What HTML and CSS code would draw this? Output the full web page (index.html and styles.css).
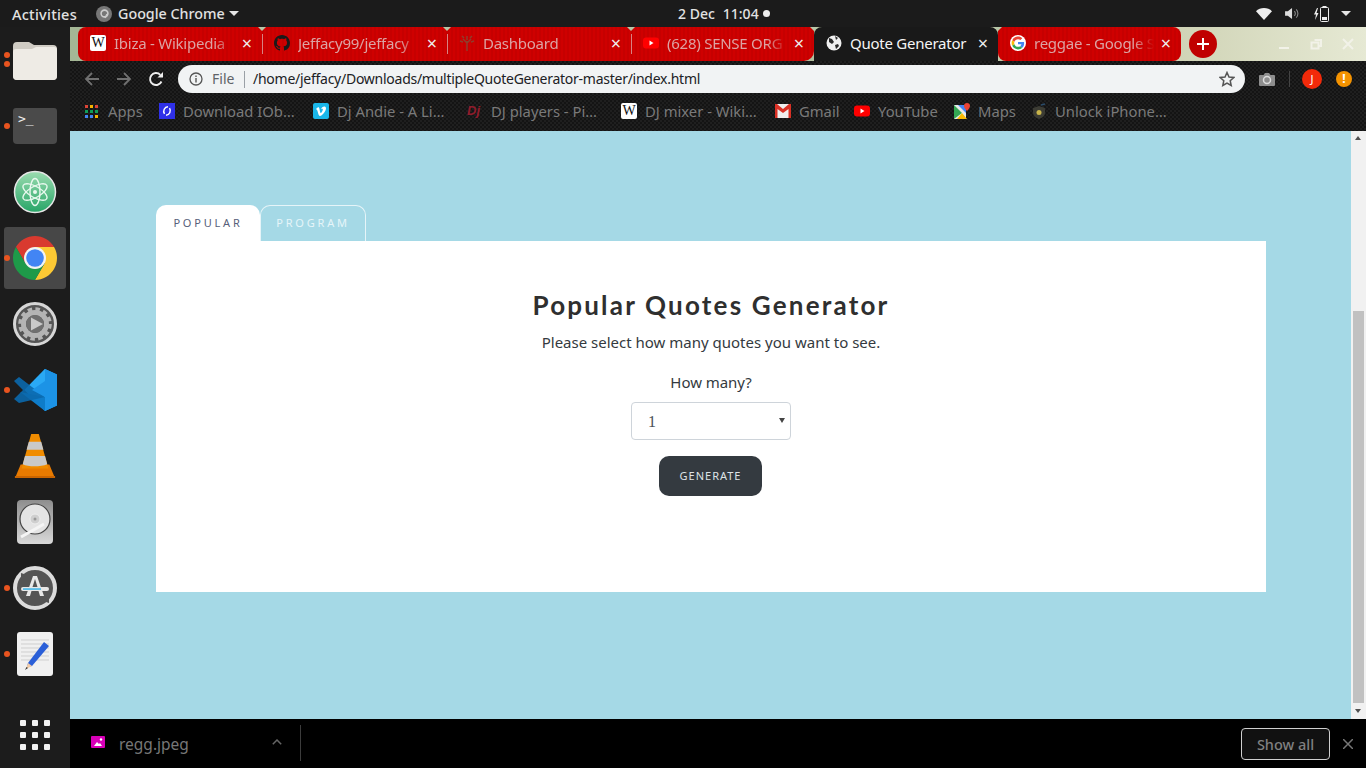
FILE: index.html
```html
<!DOCTYPE html>
<html lang="en">
<head>
<meta charset="utf-8">
<title>Quote Generator</title>
<link rel="stylesheet" href="styles.css">
</head>
<body>
<div class="desktop">
  <header class="topbar">
    <div class="top-left">
      <span class="activities">Activities</span>
      <svg class="top-chrome" viewBox="0 0 16 16"><circle cx="8" cy="8" r="8" fill="#777"/><circle cx="8.5" cy="7.5" r="3.4" fill="none" stroke="#ccc" stroke-width="1.6"/><path d="M9 12l2-4" stroke="#ccc" stroke-width="1.4"/></svg>
      <span class="app-name">Google Chrome</span>
      <span class="caret"></span>
    </div>
    <div class="clock"><span>2 Dec</span><span>11:04</span><i class="clock-dot"></i></div>
    <div class="top-right">
      <svg class="wifi" viewBox="0 0 16 12"><path d="M0 3.2C2 1.2 5 0 8 0s6 1.2 8 3.2L8 12z" fill="#eee"/></svg>
      <svg class="speaker" viewBox="0 0 16 14"><path d="M0 4.5h3L7.500 1v12L3 9.500H0z" fill="#ddd"/><path d="M10 4.500a3.500 3.500 0 0 1 0 5M12 2.500a6.500 6.500 0 0 1 0 9" fill="none" stroke="#888" stroke-width="1.200"/></svg>
      <svg class="battery" viewBox="0 0 16 16"><path d="M3 2 0 8.500h2L1 14l3.500-7h-2L4 2z" fill="#eee"/><rect x="6.500" y="1.500" width="8" height="14" rx="1" fill="none" stroke="#eee"/><rect x="8.500" y="0" width="4" height="1.500" fill="#eee"/><rect x="8" y="11" width="5" height="3" fill="#eee"/></svg>
      <span class="caret"></span>
    </div>
  </header>

  <div class="workspace">
    <nav class="dock">
      <div class="dock-item running-two">
        <svg class="dock-icon" viewBox="0 0 44 40"><path d="M0 6a4 4 0 0 1 4-4h12l5 3h19a4 4 0 0 1 4 4v27a4 4 0 0 1-4 4H4a4 4 0 0 1-4-4z" fill="#cfcbc3"/><path d="M0 12a3 3 0 0 1 3-3h16l4-2h18a3 3 0 0 1 3 3v26a4 4 0 0 1-4 4H4a4 4 0 0 1-4-4z" fill="#eeebe5"/></svg>
      </div>
      <div class="dock-item running">
        <svg class="dock-icon" viewBox="0 0 44 36"><path d="M3 0h38a3 3 0 0 1 3 3v29a4 4 0 0 1-4 4H4a4 4 0 0 1-4-4V3a3 3 0 0 1 3-3z" fill="#4a4a4a"/><text x="5" y="15" class="term-text">&gt;_</text></svg>
      </div>
      <div class="dock-item">
        <svg class="dock-icon" viewBox="0 0 44 44"><defs><linearGradient id="atomg" x1="0" y1="0" x2="0" y2="1"><stop offset="0" stop-color="#9bdcb0"/><stop offset="1" stop-color="#27a567"/></linearGradient></defs><circle cx="22" cy="22" r="20.500" fill="url(#atomg)" stroke="#e6e6e6" stroke-width="1.500"/><g fill="none" stroke="#e8f8ee" stroke-width="1.400"><ellipse cx="22" cy="22" rx="13.500" ry="5.500" transform="rotate(30 22 22)"/><ellipse cx="22" cy="22" rx="13.500" ry="5.500" transform="rotate(-30 22 22)"/><ellipse cx="22" cy="22" rx="13.500" ry="5" transform="rotate(90 22 22)"/></g><circle cx="22" cy="22" r="2" fill="#e8f8ee"/></svg>
      </div>
      <div class="dock-item running active">
        <svg class="dock-icon" viewBox="-22 -22 44 44"><path d="M0-11H19.050A22 22 0 0 0-19.050-11L-9.500 5.500z" fill="#d93a2f"/><path d="M0-11H19.050A22 22 0 0 0-19.050-11L-9.500 5.500z" fill="#fcc934" transform="rotate(120)"/><path d="M0-11H19.050A22 22 0 0 0-19.050-11L-9.500 5.500z" fill="#1e9a49" transform="rotate(240)"/><circle r="11" fill="#f3f3f3"/><circle r="8.800" fill="#4285f4"/></svg>
      </div>
      <div class="dock-item">
        <svg class="dock-icon" viewBox="0 0 44 44"><circle cx="22" cy="22" r="20.500" fill="#555" stroke="#d6d6d6" stroke-width="3"/><circle cx="22" cy="22" r="11.500" fill="none" stroke="#b4b4b4" stroke-width="5"/><circle cx="22" cy="22" r="15" fill="none" stroke="#b4b4b4" stroke-width="3.500" stroke-dasharray="4.500 3.350"/><circle cx="22" cy="22" r="9" fill="#707070"/><path d="M18 15.500 30 22l-12 6.500z" fill="#c9c9c9"/></svg>
      </div>
      <div class="dock-item running">
        <svg class="dock-icon" viewBox="0 0 44 44"><path d="M32 1 44 6.500v31L32 43 11.500 22z" fill="#1f9cf0"/><path d="M32 1v14L19 24 11.500 22z" fill="#2aa9f5"/><path d="M32 29v14L10 26l-3-2z" fill="#0e7cc9"/><path d="M32 29 6 9 1 13l9 9-9 9 5 4z" fill="#0b69ad" opacity=".9"/><path d="M32 1 44 6.500v31L32 43V29L19 22 32 13z" fill="#1c93e6"/></svg>
      </div>
      <div class="dock-item">
        <svg class="dock-icon" viewBox="0 0 42 46"><path d="M1 44l5-12h30l5 12z" fill="#e87a00"/><path d="M0 44h42v2H0z" fill="#c96400"/><path d="M17 0h8l10 36H7z" fill="#f08c00"/><path d="M14.500 8h13l2.300 8.500H12.200z" fill="#c9c9c9"/><path d="M10.500 23h21l2.300 8.500c-7 3-20 3-25.600 0z" fill="#c9c9c9"/></svg>
      </div>
      <div class="dock-item">
        <svg class="dock-icon disk-icon" viewBox="0 0 36 44"><defs><linearGradient id="diskg" x1="0" y1="0" x2="0" y2="1"><stop offset="0" stop-color="#8e8e8e"/><stop offset="1" stop-color="#d9d9d9"/></linearGradient></defs><rect width="36" height="44" rx="4" fill="url(#diskg)"/><circle cx="18" cy="19" r="15" fill="#e4e4e4" stroke="#444" stroke-width="1.200"/><circle cx="18" cy="19" r="5" fill="#cfcfcf" stroke="#eee"/><circle cx="18" cy="19" r="1.500" fill="#999"/><path d="M4 37 27 24" stroke="#f5f5f5" stroke-width="3"/></svg>
      </div>
      <div class="dock-item running">
        <svg class="dock-icon" viewBox="0 0 44 44"><circle cx="22" cy="22" r="20" fill="#555" stroke="#dcdcdc" stroke-width="4"/><path d="M8 7 14 9 8 14zM36 37l-6-2 6-5z" fill="#555"/><path d="M13 30 20 10h4l7 20h-4l-1.500-5h-7L17 30zM19.500 21h5L22 13z" fill="#e8e8e8"/><rect x="8" y="21" width="28" height="4" rx="2" fill="#e8e8e8"/><rect x="10" y="22.300" width="18" height="1.500" fill="#3bb3e8"/></svg>
      </div>
      <div class="dock-item running">
        <svg class="dock-icon disk-icon" viewBox="0 0 36 44"><rect width="36" height="44" rx="3" fill="#f0f0f0"/><path d="M4 8h28M4 12h28M4 16h28M4 20h28M4 24h28M4 28h28" stroke="#cfcfcf"/><path d="M11 31 27 10l5 4-17 20-5 1z" fill="#2a5fd8"/><path d="M11 31l4 3-6 3z" fill="#f1cba6"/><path d="M8 38l1.500-3 1.500 1z" fill="#333"/></svg>
      </div>
      <div class="dock-spacer"></div>
      <div class="dock-item apps-grid">
        <div class="dots"><i></i><i></i><i></i><i></i><i></i><i></i><i></i><i></i><i></i></div>
      </div>
    </nav>

    <div class="browser">
      <div class="tabstrip">
        <div class="tabs">
          <div class="tab first">
            <span class="fav wiki">W</span><span class="tab-title">Ibiza - Wikipedia</span><span class="tab-x">×</span>
          </div>
          <div class="tab">
            <svg class="fav" viewBox="0 0 16 16"><path fill="#1a1a1a" d="M8 0C3.580 0 0 3.580 0 8c0 3.540 2.290 6.530 5.470 7.590.4.070.55-.17.55-.38 0-.19-.01-.82-.01-1.490-2.010.37-2.530-.49-2.690-.94-.09-.23-.48-.94-.82-1.130-.28-.15-.68-.52-.01-.53.63-.01 1.080.58 1.230.82.72 1.210 1.870.87 2.330.66.07-.52.28-.87.51-1.070-1.780-.2-3.640-.89-3.640-3.950 0-.87.31-1.590.82-2.150-.08-.2-.36-1.020.08-2.120 0 0 .67-.21 2.200.82.64-.18 1.320-.27 2-.27.68 0 1.360.09 2 .27 1.530-1.040 2.200-.82 2.200-.82.44 1.100.16 1.920.08 2.120.51.56.82 1.270.82 2.150 0 3.070-1.870 3.750-3.650 3.950.29.25.54.73.54 1.480 0 1.070-.01 1.930-.01 2.200 0 .21.15.46.55.38A8.013 8.013 0 0 0 16 8c0-4.420-3.580-8-8-8z"/></svg>
            <span class="tab-title">Jeffacy99/jeffacy</span><span class="tab-x">×</span>
          </div>
          <div class="tab">
            <svg class="fav" viewBox="0 0 16 16"><path d="M8 16V6M8 8 4 4M8 8l4-4M8 5V1M4 7 1 6M12 7l3-1M5 3 3 1M11 3l2-2" stroke="#8f3d2c" stroke-width="1.500" fill="none"/></svg>
            <span class="tab-title">Dashboard</span><span class="tab-x">×</span>
          </div>
          <div class="tab before-active">
            <svg class="fav" viewBox="0 0 16 16"><rect y="2.500" width="16" height="11" rx="3" fill="#f00"/><path d="M6.500 5.500 10.500 8l-4 2.500z" fill="#fff"/></svg>
            <span class="tab-title">(628) SENSE ORG</span><span class="tab-x">×</span>
          </div>
          <div class="tab current">
            <svg class="fav" viewBox="0 0 16 16"><circle cx="8" cy="8" r="7.500" fill="#f0f0f0"/><path d="M3 3l3 1 2 3-2 2-3-2zM9 10l3-1 1 2-3 3zM9 1l3 2-2 2z" fill="#2a2a2a"/></svg>
            <span class="tab-title">Quote Generator</span><span class="tab-x">×</span>
          </div>
          <div class="tab after-active">
            <svg class="fav" viewBox="-6 -6 60 60"><circle cx="24" cy="24" r="30" fill="#fff"/><path fill="#EA4335" d="M24 9.500c3.540 0 6.710 1.220 9.210 3.600l6.850-6.850C35.900 2.380 30.470 0 24 0 14.620 0 6.510 5.380 2.560 13.220l7.980 6.190C12.430 13.720 17.740 9.500 24 9.500z"/><path fill="#4285F4" d="M46.980 24.550c0-1.570-.15-3.090-.38-4.550H24v9.020h12.940c-.58 2.960-2.260 5.480-4.780 7.180l7.730 6c4.510-4.180 7.090-10.360 7.090-17.650z"/><path fill="#FBBC05" d="M10.530 28.590c-.48-1.450-.76-2.990-.76-4.590s.27-3.140.76-4.590l-7.980-6.190C.92 16.460 0 20.120 0 24c0 3.880.92 7.540 2.560 10.780l7.970-6.190z"/><path fill="#34A853" d="M24 48c6.480 0 11.930-2.130 15.890-5.810l-7.730-6c-2.150 1.450-4.920 2.300-8.160 2.300-6.260 0-11.570-4.220-13.470-9.910l-7.980 6.190C6.510 42.620 14.620 48 24 48z"/></svg>
            <span class="tab-title">reggae - Google S</span><span class="tab-x">×</span>
          </div>
        </div>
        <div class="new-tab"><svg viewBox="0 0 14 14"><path d="M7 1v12M1 7h12" stroke="#fff" stroke-width="2"/></svg></div>
        <div class="win-controls">
          <svg viewBox="0 0 14 14"><rect x="2" y="10" width="10" height="2" fill="#f2f2e8"/></svg>
          <svg viewBox="0 0 14 14"><path d="M5.500 3H12v6h-2.500M2.500 5.500H9.500V11.500H2.500z" fill="none" stroke="#f2f2e8" stroke-width="2"/></svg>
          <svg viewBox="0 0 14 14"><path d="M2 2l10 10M12 2 2 12" stroke="#f2f2e8" stroke-width="2"/></svg>
        </div>
      </div>

      <div class="toolbar">
        <svg class="nav-btn" viewBox="0 0 16 16"><path d="M15 8H2M8 2 2 8l6 6" fill="none" stroke="#707070" stroke-width="1.800"/></svg>
        <svg class="nav-btn" viewBox="0 0 16 16"><path d="M1 8h13M8 2l6 6-6 6" fill="none" stroke="#707070" stroke-width="1.800"/></svg>
        <svg class="nav-btn" viewBox="0 0 16 16"><path d="M13.500 10.500A6 6 0 1 1 12.300 3.800" fill="none" stroke="#eee" stroke-width="1.900"/><path d="M9.500 6.500H15V1z" fill="#eee"/></svg>
        <div class="omnibox">
          <svg class="info" viewBox="0 0 14 14"><circle cx="7" cy="7" r="6" fill="none" stroke="#555" stroke-width="1.300"/><path d="M7 6v4.500M7 3.500v1.500" stroke="#555" stroke-width="1.400"/></svg>
          <span class="scheme">File</span>
          <span class="omni-sep"></span>
          <span class="url">/home/jeffacy/Downloads/multipleQuoteGenerator-master/index.html</span>
          <svg class="star" viewBox="0 0 16 16"><path d="M8 1.500 10 6l4.800.5-3.600 3.200 1 4.800L8 12l-4.200 2.500 1-4.800L1.200 6.500 6 6z" fill="none" stroke="#555" stroke-width="1.500"/></svg>
        </div>
        <svg class="camera" viewBox="0 0 16 14"><path d="M1 3h3.500L6 1h4l1.500 2H15a1 1 0 0 1 1 1v9a1 1 0 0 1-1 1H1a1 1 0 0 1-1-1V4a1 1 0 0 1 1-1z" fill="#8e8e8e"/><circle cx="8" cy="8" r="3.500" fill="none" stroke="#ddd" stroke-width="1.500"/></svg>
        <span class="tool-sep"></span>
        <span class="avatar">J</span>
        <span class="alert">!</span>
      </div>

      <div class="bookmarks">
        <div class="bm"><span class="apps-ico"><i></i><i></i><i></i><i></i><i></i><i></i><i></i><i></i><i></i></span><span class="bm-label">Apps</span></div>
        <div class="bm"><svg class="bm-ico" viewBox="0 0 16 16"><rect width="16" height="16" fill="#2f30e8"/><path d="M9 3.800a4.500 4.500 0 0 0-3.500 7M7 12.200a4.500 4.500 0 0 0 3.500-7" fill="none" stroke="#fff" stroke-width="1.500"/></svg><span class="bm-label">Download IOb…</span></div>
        <div class="bm"><svg class="bm-ico" viewBox="0 0 16 16"><rect width="16" height="16" rx="2" fill="#1ab7ea"/><path d="M3 6c2-2 3-2.500 3.500 0 .4 2 .7 4 1.300 4 .8 0 2.200-3 2-3.800-.2-.8-1.200-.5-1.700 0C8.500 3.500 13 2 13 5.500 13 8 9 13 7 13c-2 0-2-5.500-3.200-6.200z" fill="#fff"/></svg><span class="bm-label">Dj Andie - A Li…</span></div>
        <div class="bm"><svg class="bm-ico" viewBox="0 0 16 16"><text x="0" y="12" class="dj-mark">Dj</text></svg><span class="bm-label">DJ players - Pi…</span></div>
        <div class="bm"><span class="fav wiki">W</span><span class="bm-label">DJ mixer - Wiki…</span></div>
        <div class="bm"><svg class="bm-ico" viewBox="0 0 16 14"><rect width="16" height="14" fill="#eee"/><path d="M0 0h2l6 5 6-5h2v14h-2.500V5L8 9 2.500 5v9H0z" fill="#d93025"/></svg><span class="bm-label">Gmail</span></div>
        <div class="bm"><svg class="bm-ico" viewBox="0 0 16 16"><rect y="2.500" width="16" height="11" rx="3" fill="#f00"/><path d="M6.500 5.500 10.500 8l-4 2.500z" fill="#fff"/></svg><span class="bm-label">YouTube</span></div>
        <div class="bm"><svg class="bm-ico" viewBox="0 0 16 16"><path d="M0 2h12v14H0z" fill="#e8e8e8"/><path d="M0 2l8 8-8 6z" fill="#34a853"/><path d="M8 10l5 6H3z" fill="#fbbc05"/><path d="M4 2l8 8V2z" fill="#4285f4"/><path d="M13 0a3 3 0 0 1 3 3c0 2-3 5-3 5s-3-3-3-5a3 3 0 0 1 3-3z" fill="#ea4335"/></svg><span class="bm-label">Maps</span></div>
        <div class="bm"><svg class="bm-ico" viewBox="0 0 16 16"><path d="M8 3 14 5v5c0 3-3 5-6 6-3-1-6-3-6-6V5z" fill="#3c3c34"/><circle cx="8" cy="9.500" r="2.500" fill="#c9b54a"/><path d="M10 2l4-1" stroke="#2a4a68" stroke-width="1.500"/></svg><span class="bm-label">Unlock iPhone…</span></div>
      </div>

      <div class="viewport">
        <main class="page">
          <div class="panel-tabs">
            <a class="panel-tab on">POPULAR</a>
            <a class="panel-tab">PROGRAM</a>
          </div>
          <section class="card">
            <h1 class="heading">Popular Quotes Generator</h1>
            <p class="lead">Please select how many quotes you want to see.</p>
            <label class="how" for="count">How many?</label>
            <span class="select-wrap">
              <select id="count" class="count"><option>1</option><option>2</option><option>3</option></select>
            </span>
            <button class="generate" type="button">GENERATE</button>
          </section>
        </main>
        <div class="scrollbar">
          <span class="arrow up"></span>
          <span class="sb-fill"></span>
          <span class="thumb"></span>
          <span class="arrow down"></span>
        </div>
      </div>

      <footer class="downloads">
        <svg class="file-ico" viewBox="0 0 14 12"><rect width="14" height="12" rx="1" fill="#d800b8"/><path d="M3 10l3-4 2 2 1-1 2 3z" fill="#fff"/><circle cx="10" cy="3.500" r="1.200" fill="#fff"/></svg>
        <span class="file-name">regg.jpeg</span>
        <svg class="chev" viewBox="0 0 10 6"><path d="M.8 5.200 5 1l4.200 4.200" fill="none" stroke="#666" stroke-width="1.500"/></svg>
        <span class="dl-sep"></span>
        <span class="dl-fill"></span>
        <button class="show-all" type="button">Show all</button>
        <svg class="dl-x" viewBox="0 0 10 10"><path d="M0 0l10 10M10 0 0 10" stroke="#777" stroke-width="1.500"/></svg>
      </footer>
    </div>
  </div>
</div>
</body>
</html>
```

FILE: styles.css
```css
* { box-sizing: border-box; }
html, body { margin: 0; height: 100%; overflow: hidden; }
body { font-family: "Noto Sans", "Liberation Sans", sans-serif; background: #1c1c1c; }
svg { display: block; flex: none; }

.desktop { width: 1366px; height: 768px; display: flex; flex-direction: column; }

/* GNOME top bar */
.topbar { height: 27px; background: #1b1b1b; display: grid; grid-template-columns: 678px auto 1fr; align-items: center; color: #e2e2e2; font-size: 14px; }
.top-left { display: flex; align-items: center; padding-left: 12px; }
.activities { width: 84px; font-size: 14.500px; letter-spacing: .25px; font-weight: 500; }
.top-chrome { width: 16px; height: 16px; margin-right: 6px; }
.app-name { width: 111px; font-size: 14.300px; font-weight: 500; }
.caret { width: 0; height: 0; border-left: 5px solid transparent; border-right: 5px solid transparent; border-top: 5px solid #e6e6e6; }
.clock { display: flex; align-items: center; gap: 8px; font-weight: 500; }
.clock-dot { width: 7px; height: 7px; margin-left: -4px; border-radius: 50%; background: #eee; }
.top-right { display: flex; align-items: center; justify-content: flex-end; gap: 13px; padding-right: 15px; }
.top-right .caret { margin-left: -2px; }
.wifi { width: 16px; height: 12px; }
.speaker { width: 15px; height: 13px; margin-right: 1px; }
.battery { width: 16px; height: 16px; }

.workspace { flex: 1; display: flex; min-height: 0; }

/* Dock */
.dock { width: 70px; flex: none; background: #1c1c1c; display: flex; flex-direction: column; }
.dock-item { height: 66px; flex: none; display: flex; align-items: center; justify-content: center; position: relative; }
.dock-icon { width: 44px; height: 44px; }
.dock-item.running:nth-child(2) .dock-icon { height: 36px; }
.disk-icon { width: 36px; }
.term-text { font-family: "DejaVu Sans Mono", monospace; font-size: 13px; fill: #eee; }
.dj-mark { font: italic 700 13px "Liberation Sans", sans-serif; fill: #8f1c2c; }
.dock-spacer { flex: 1; }
.dock-item.active::before { content: ""; position: absolute; left: 4px; top: 2px; width: 62px; height: 62px; border-radius: 3px; background: #474747; }
.dock-item.active .dock-icon { position: relative; }
.running::after, .running-two::after { content: ""; position: absolute; left: 4px; top: 30px; width: 6px; height: 6px; border-radius: 50%; background: #e9541f; }
.running-two::after { top: 25px; box-shadow: 0 9px 0 #e9541f; }
.dots { display: grid; grid-template-columns: repeat(3, 6px); gap: 6px; }
.dots i { width: 6px; height: 6px; border-radius: 1px; background: #f2f2f2; }

/* Browser */
.browser { flex: 1; min-width: 0; display: flex; flex-direction: column; }
.tabstrip { height: 34px; flex: none; display: flex; padding-left: 8px; background: linear-gradient(90deg, #a4b795 0%, #b4c0a0 60%, #cfd3b5 85%, #e6e9d4 100%); }
.tabs { display: grid; grid-template-columns: 184px 185px 184px 183px 184px 183px; }
.tab { display: flex; align-items: center; padding: 0 7px 2px 12px; position: relative; color: #dca3a3; font-size: 15px;
  background: repeating-linear-gradient(90deg, #c60000 0 2px, #cf0000 2px 4px); border-radius: 0; }
.tab.first { border-radius: 8px 0 0 8px; }
.tab + .tab::before { content: ""; position: absolute; left: 0; top: 7px; width: 1px; height: 20px; background: #d98282; }
.tab + .tab::after { content: ""; position: absolute; left: -4px; top: 0; border-left: 4px solid transparent; border-right: 4px solid transparent; border-top: 4px solid #b7c7a8; }
.tab.before-active { border-radius: 0 0 10px 0; }
.tab.current { background: #191919; color: #f5f5f5; border-radius: 8px 8px 0 0; }
.tab.current::before, .tab.after-active::before { display: none; }
.tab.after-active { border-radius: 0 8px 8px 8px; }
.fav { width: 16px; height: 16px; flex: none; }
.wiki { display: flex; align-items: center; justify-content: center; background: #fff; border-radius: 2px; color: #111; font: 400 14px "Liberation Serif", serif; }
.tab-title { flex: 1; min-width: 0; margin-left: 8px; white-space: nowrap; overflow: hidden; letter-spacing: -.25px;
  -webkit-mask-image: linear-gradient(90deg, #000 calc(100% - 22px), transparent calc(100% - 2px)); mask-image: linear-gradient(90deg, #000 calc(100% - 22px), transparent calc(100% - 2px)); }
.current .tab-title { -webkit-mask-image: none; mask-image: none; }
.tab-x { width: 16px; text-align: center; font-size: 18px; line-height: 16px; color: #eee; margin-left: 2px; }
.new-tab { width: 28px; height: 28px; margin: 3px 0 0 8px; border-radius: 50%; background: #c00000; display: flex; align-items: center; justify-content: center; }
.new-tab svg { width: 14px; height: 14px; }
.win-controls { margin-left: auto; display: flex; gap: 18px; padding: 10px 11px 0 0; }
.win-controls svg { width: 14px; height: 14px; }

.toolbar { height: 35px; flex: none; display: flex; align-items: center; padding: 0 0 0 14px; color: #333;
  background: conic-gradient(#1f1f1f 25%, #141414 0 50%, #1f1f1f 0 75%, #141414 0) 0 0 / 4px 4px; }
.nav-btn { width: 16px; height: 16px; margin-right: 16px; }
.nav-btn:nth-of-type(3) { margin-right: 14px; }
.omnibox { width: 1067px; height: 28px; margin-top: 1px; flex: none; background: #f1f3f4; border-radius: 14px; display: flex; align-items: center; padding: 0 10px 0 11px; font-size: 14px; }
.info { width: 14px; height: 14px; }
.scheme { margin-left: 9px; color: #5f6368; width: 26px; padding-bottom: 2px; }
.omni-sep { width: 1px; height: 17px; margin: 0 8px 0 6px; background: #9aa0a6; }
.url { flex: 1; color: #202124; white-space: nowrap; letter-spacing: -.26px; padding-bottom: 2px; }
.star { width: 16px; height: 16px; }
.camera { width: 16px; height: 14px; margin-left: 14px; }
.tool-sep { width: 1px; height: 16px; margin-left: 14px; background: #444; }
.avatar { width: 20px; height: 20px; margin-left: 12px; border-radius: 50%; background: #f22a0a; color: #fff; font-size: 11px; display: flex; align-items: center; justify-content: center; }
.alert { width: 16px; height: 16px; margin-left: 14px; border-radius: 50%; background: #f59300; color: #fff; font-size: 12px; font-weight: 700; display: flex; align-items: center; justify-content: center; }

.bookmarks { height: 35px; flex: none; display: grid; grid-template-columns: 74px 154px 154px 154px 154px 79px 100px 77px auto; align-items: center; padding: 0 0 5px 15px; font-size: 14.800px; color: #7a7a7a;
  background: conic-gradient(#1f1f1f 25%, #141414 0 50%, #1f1f1f 0 75%, #141414 0) 0 0 / 4px 4px; }
.bm { display: flex; align-items: center; gap: 8px; }
.bm-ico { width: 16px; height: 16px; }
.bm-label { white-space: nowrap; }
.apps-ico { width: 13px; height: 13px; margin-right: 2px; display: grid; grid-template-columns: repeat(3, 3px); gap: 2px; }
.apps-ico i { width: 3px; height: 3px; background: #db4437; }
.apps-ico i:nth-child(3n+2) { background: #f4b400; }
.apps-ico i:nth-child(n+4) { background: #0f9d58; }
.apps-ico i:nth-child(n+7) { background: #4285f4; }
.apps-ico i:nth-child(9) { background: #f4b400; }

/* Page */
.viewport { flex: 1; min-height: 0; display: flex; }
.page { flex: 1; min-width: 0; background: #a5d9e6; padding: 74px 0 0 86px; }
.panel-tabs { display: flex; height: 36px; }
.panel-tab { display: flex; align-items: center; justify-content: center; padding-bottom: 2px; font-size: 11px; letter-spacing: 2.800px; border-radius: 10px 10px 0 0; }
.panel-tab.on { width: 104px; background: #fff; color: #57607a; }
.panel-tab:not(.on) { width: 106px; border: 1px solid #e6f4f8; border-bottom: 0; color: #e6f5f9; }
.card { width: 1110px; height: 351px; background: #fff; display: flex; flex-direction: column; align-items: center; padding-top: 44px; color: #343a40; }
.heading { margin: 0; font: 700 26px/40px "Lato", sans-serif; letter-spacing: 2.200px; color: #2f2f2f; }
.lead { margin: 0; height: 34px; padding-top: 5px; font-size: 15px; line-height: 24px; }
.how { margin-top: 11px; font-size: 15px; line-height: 24px; letter-spacing: -.05px; }
.select-wrap { display: block; margin-top: 8px; position: relative; }
.select-wrap::after { content: ""; position: absolute; right: 6px; top: 16px; border-left: 3px solid transparent; border-right: 3px solid transparent; border-top: 5px solid #444; pointer-events: none; }
.count { display: block; width: 160px; height: 38px; padding: 0 16px; appearance: none; -webkit-appearance: none; background: #fff; border: 1px solid #ced4da; border-radius: 4px; color: #495057; font: 16px "Liberation Serif", serif; }
.generate { width: 103px; height: 40px; margin: 16px 1px 0 0; padding: 0 0 2px; background: #343a40; border: 0; border-radius: 10px; color: #dfe3e6; font: 11px "Noto Sans", sans-serif; letter-spacing: 1px; }

.scrollbar { width: 15px; flex: none; background: #f1f1f1; display: flex; flex-direction: column; align-items: center; }
.arrow { height: 15px; flex: none; position: relative; width: 15px; }
.arrow::after { content: ""; position: absolute; left: 4px; top: 5px; border-left: 3.500px solid transparent; border-right: 3.500px solid transparent; }
.arrow.up::after { border-bottom: 4px solid #505050; }
.arrow.down::after { border-top: 4px solid #505050; }
.sb-fill { flex: 1; }
.thumb { width: 11px; height: 392px; flex: none; background: #c1c1c1; align-self: flex-end; margin: 0 2px 1px 0; }

/* Download shelf */
.downloads { height: 49px; flex: none; background: #000; display: flex; align-items: center; padding-left: 21px; color: #777; font-size: 15.500px; }
.file-ico { width: 14px; height: 12px; margin-top: -4px; }
.file-name { margin-left: 14px; width: 153px; }
.chev { width: 10px; height: 6px; margin-top: -4px; }
.dl-sep { width: 1px; height: 36px; margin: -1px 0 0 18px; background: #3c3c3c; }
.dl-fill { flex: 1; }
.show-all { width: 89px; height: 32px; background: #111; border: 1px solid #cfcfcf; border-radius: 4px; color: #808080; font: 500 14.500px "Noto Sans", sans-serif; }
.dl-x { width: 10px; height: 10px; margin: 0 13px 0 13px; }
```
